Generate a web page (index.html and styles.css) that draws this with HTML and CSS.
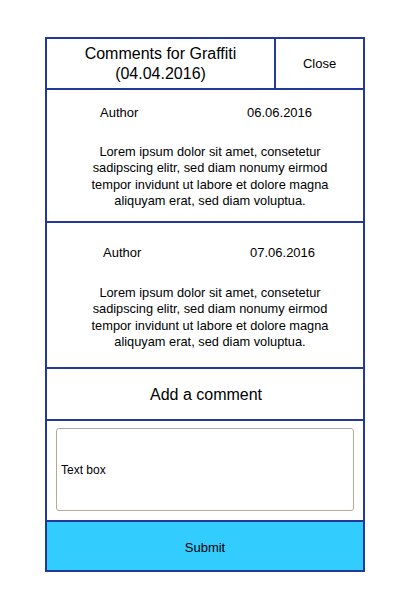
FILE: index.html
```html
<!DOCTYPE html>
<html>
<head>
<meta charset="utf-8">
<link rel="stylesheet" href="styles.css">
</head>
<body>
<div class="frame">
  <div class="header">
    <div class="title">Comments for Graffiti<br>(04.04.2016)</div>
    <div class="close">Close</div>
  </div>
  <div class="comment comment-first">
    <div class="meta"><span class="author">Author</span><span class="date">06.06.2016</span></div>
    <p class="body">Lorem ipsum dolor sit amet, consetetur<br>sadipscing elitr, sed diam nonumy eirmod<br>tempor invidunt ut labore et dolore magna<br>aliquyam erat, sed diam voluptua.</p>
  </div>
  <div class="comment comment-second">
    <div class="meta"><span class="author">Author</span><span class="date">07.06.2016</span></div>
    <p class="body">Lorem ipsum dolor sit amet, consetetur<br>sadipscing elitr, sed diam nonumy eirmod<br>tempor invidunt ut labore et dolore magna<br>aliquyam erat, sed diam voluptua.</p>
  </div>
  <div class="add">Add a comment</div>
  <div class="input-area">
    <div class="textbox">Text box</div>
  </div>
  <div class="submit">Submit</div>
</div>
</body>
</html>
```
FILE: styles.css
```css
* { box-sizing: border-box; }
html, body { margin: 0; padding: 0; background: #fff; }
body {
  font-family: "Liberation Sans", Arial, sans-serif;
  color: #000;
  width: 400px;
  height: 600px;
}
.frame {
  margin: 37px 0 0 45px;
  width: 320px;
  border: 2px solid #23399a;
  display: flex;
  flex-direction: column;
}
.header {
  display: flex;
  height: 51px;
  border-bottom: 2px solid #23399a;
}
.title {
  width: 229px;
  border-right: 2px solid #23399a;
  font-size: 16px;
  line-height: 20px;
  text-align: center;
  display: flex;
  align-items: center;
  justify-content: center;
}
.close {
  flex: 1;
  font-size: 13px;
  display: flex;
  align-items: center;
  justify-content: center;
}
.comment {
  border-bottom: 2px solid #23399a;
  font-size: 12.8px;
}
.comment-first { height: 133px; padding-top: 15px; }
.comment-second { height: 146px; padding-top: 22px; }
.meta {
  display: flex;
  font-size: 13px;
  line-height: 16px;
  padding-left: 53px;
}
.comment-second .meta { padding-left: 56px; }
.author { width: 147px; }
.body {
  margin: 0;
  margin-top: 23px;
  padding-left: 10px;
  text-align: center;
  line-height: 16.3px;
}
.comment-second .body { margin-top: 24px; }
.add {
  height: 52px;
  border-bottom: 2px solid #23399a;
  font-size: 16px;
  display: flex;
  align-items: center;
  justify-content: center;
  padding-left: 2px;
  padding-top: 1px;
}
.input-area {
  height: 101px;
  border-bottom: 2px solid #23399a;
  padding: 7px 9px 0 9px;
}
.textbox {
  height: 83px;
  border: 1px solid #b3aa9b;
  border-radius: 3px;
  font-size: 12px;
  display: flex;
  align-items: center;
  padding-left: 4px;
}
.submit {
  height: 48px;
  background: #33ccff;
  font-size: 13px;
  display: flex;
  align-items: center;
  justify-content: center;
  padding-top: 2px;
}
```
